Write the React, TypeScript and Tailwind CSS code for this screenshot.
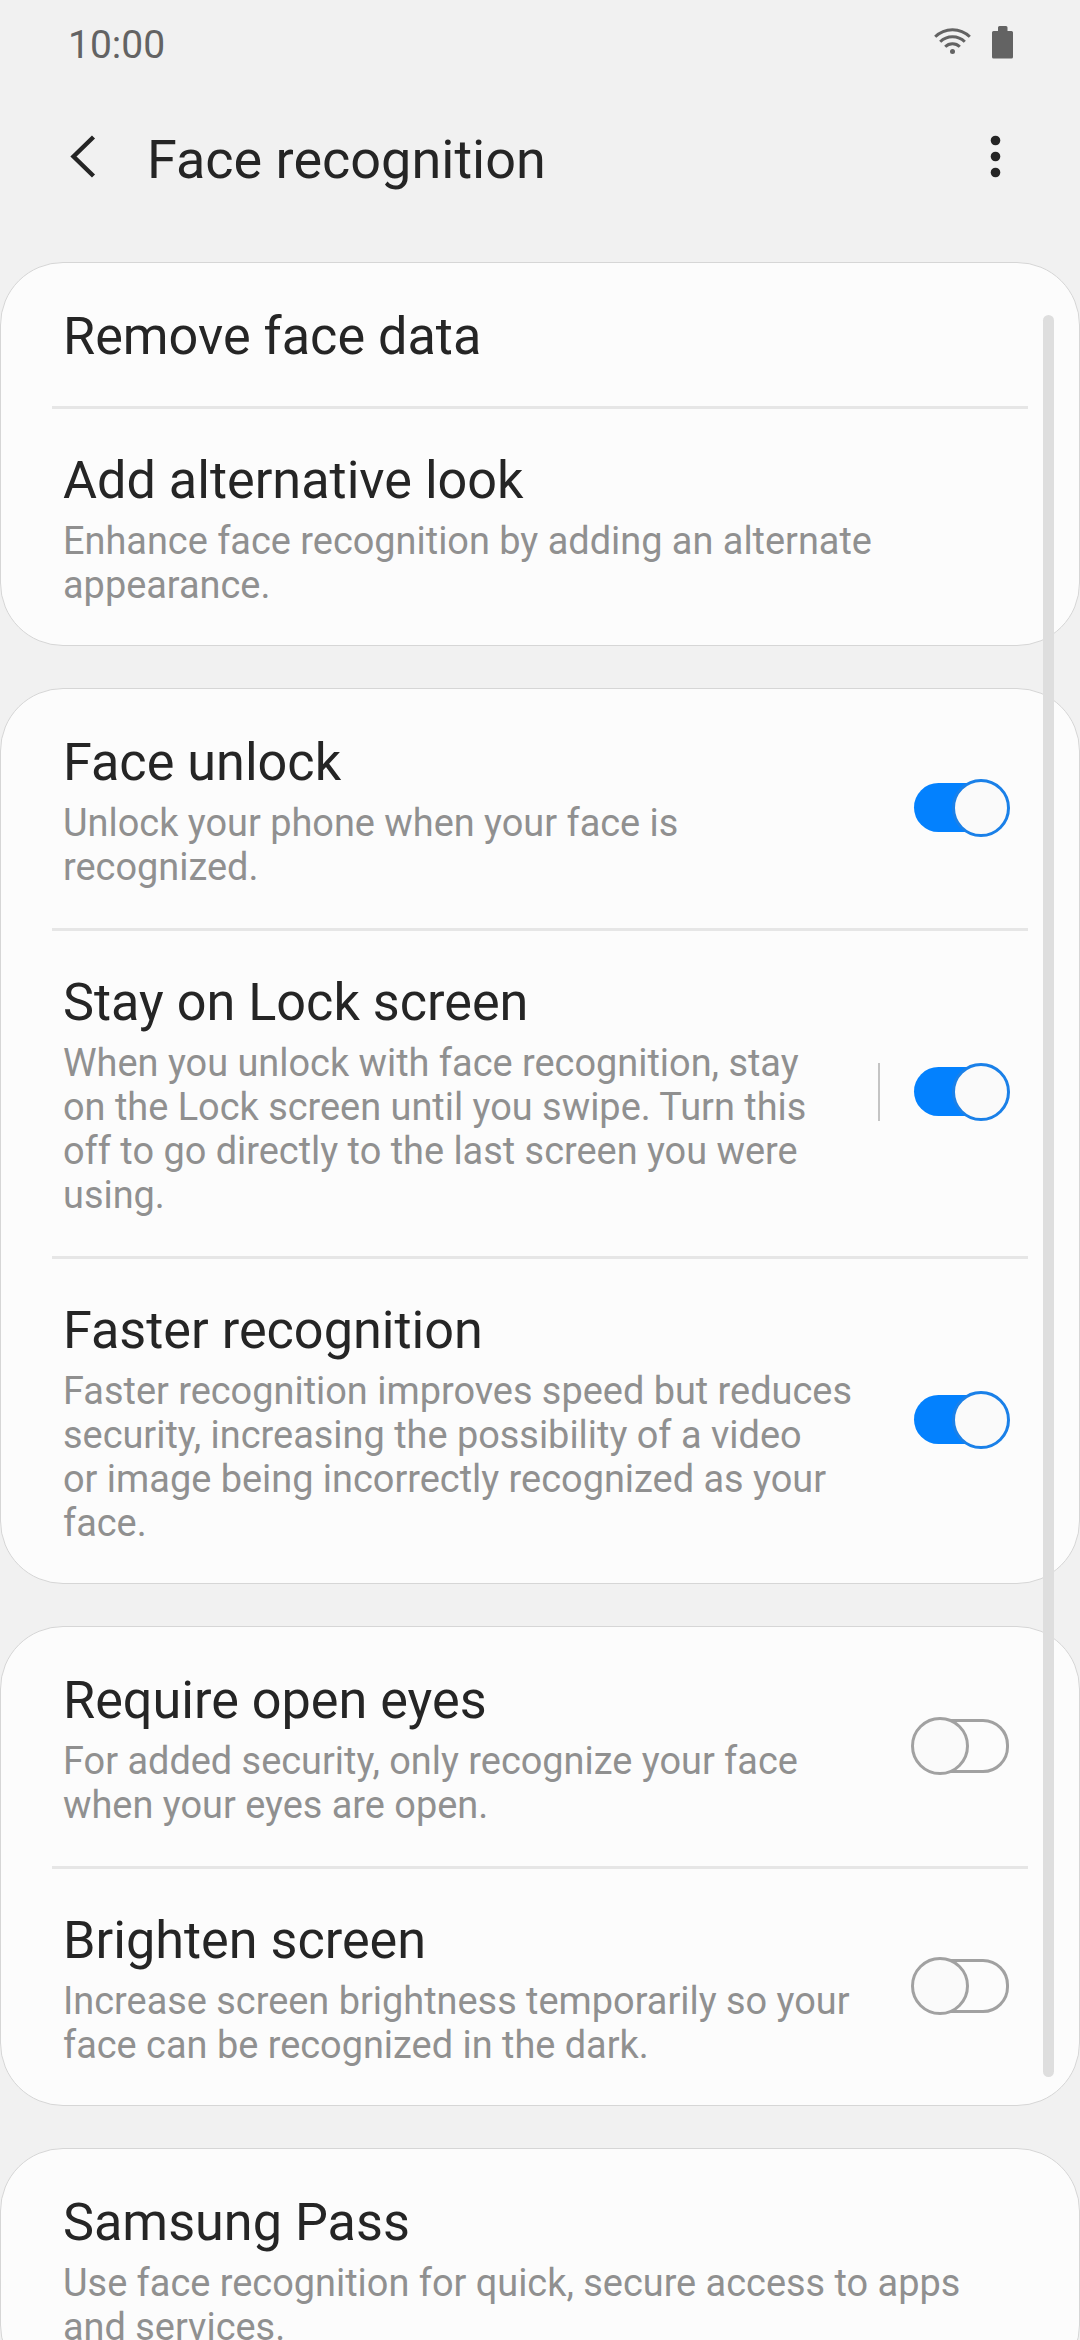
import React from "react";

type RowData = {
  title: string;
  summary?: string;
  toggle?: boolean;
  separator?: boolean;
};

const groups: RowData[][] = [
  [
    { title: "Remove face data" },
    {
      title: "Add alternative look",
      summary: "Enhance face recognition by adding an alternate\nappearance.",
    },
  ],
  [
    {
      title: "Face unlock",
      summary: "Unlock your phone when your face is\nrecognized.",
      toggle: true,
    },
    {
      title: "Stay on Lock screen",
      summary:
        "When you unlock with face recognition, stay\non the Lock screen until you swipe. Turn this\noff to go directly to the last screen you were\nusing.",
      toggle: true,
      separator: true,
    },
    {
      title: "Faster recognition",
      summary:
        "Faster recognition improves speed but reduces\nsecurity, increasing the possibility of a video\nor image being incorrectly recognized as your\nface.",
      toggle: true,
    },
  ],
  [
    {
      title: "Require open eyes",
      summary: "For added security, only recognize your face\nwhen your eyes are open.",
      toggle: false,
    },
    {
      title: "Brighten screen",
      summary:
        "Increase screen brightness temporarily so your\nface can be recognized in the dark.",
      toggle: false,
    },
  ],
  [
    {
      title: "Samsung Pass",
      summary: "Use face recognition for quick, secure access to apps\nand services.",
    },
  ],
];

function Toggle({ on }: { on: boolean }) {
  return (
    <svg
      className="h-[58px] w-[100px] shrink-0"
      viewBox="0 0 100 58"
      role="switch"
      aria-checked={on}
    >
      {on ? (
        <>
          <rect x="3" y="4" width="92" height="49" rx="24.5" fill="#0381fe" />
          <circle cx="70" cy="29" r="27.5" fill="#fafafa" stroke="#1a80e8" strokeWidth="3" />
        </>
      ) : (
        <>
          <rect x="6" y="3.5" width="90.5" height="51" rx="24.5" fill="#fcfcfc" stroke="#a1a1a1" strokeWidth="3" />
          <circle cx="29" cy="29" r="27.5" fill="#fafafa" stroke="#a1a1a1" strokeWidth="3" />
        </>
      )}
    </svg>
  );
}

function Row({ row, divided }: { row: RowData; divided: boolean }) {
  return (
    <div className="relative flex items-center pr-[68px] pl-[62px]">
      {divided && <div className="absolute top-0 right-[51px] left-[51px] h-[3px] bg-[#e6e6e6]" />}
      <div className="flex-1 pt-11 pb-[39px]">
        <div className="text-[52.2px] leading-[61px] text-[#252525]">{row.title}</div>
        {row.summary && (
          <div className="mt-2 text-[37.9px] leading-[44px] whitespace-pre text-[#909090]">
            {row.summary}
          </div>
        )}
      </div>
      {row.separator && <div className="mr-[31px] h-[58px] w-[2px] bg-[#c4c4c4]" />}
      {row.toggle !== undefined && <Toggle on={row.toggle} />}
    </div>
  );
}

export default function App() {
  return (
    <div className="relative flex h-[2340px] w-[1080px] flex-col overflow-hidden bg-[#f1f1f1] font-['Roboto',sans-serif]">
      <div className="flex h-[88px] shrink-0 items-start justify-between pr-[67px] pl-[68px]">
        <div className="mt-[22px] text-[39px] leading-[46px] text-[#636363]">10:00</div>
        <div className="mt-[26px] flex items-center gap-[21px]">
          <svg className="h-[34px] w-[37px]" viewBox="0 0 37 34" fill="none" stroke="#636363" strokeWidth="3">
            <path d="M1.2 10.8a24.5 24.5 0 0 1 34.6 0" />
            <path d="M6.2 15.8a17.4 17.4 0 0 1 24.6 0" />
            <path d="M11.2 20.8a10.3 10.3 0 0 1 14.6 0" />
            <circle cx="18.5" cy="25.5" r="2.5" fill="#636363" stroke="none" />
          </svg>
          <svg className="h-[34px] w-[21px]" viewBox="0 0 21 34" fill="#636363">
            <path d="M6 5V1.5Q6 0 7.5 0h6.5Q15.5 0 15.5 1.5V5H19.5Q21 5 21 6.5V31Q21 32.5 19.5 32.5H1.5Q0 32.5 0 31V6.5Q0 5 1.5 5Z" />
          </svg>
        </div>
      </div>
      <header className="flex h-[174px] shrink-0 items-start pr-[79px] pl-[68px]">
        <svg className="mt-[47px] h-[43px] w-[30px]" viewBox="0 0 30 43" fill="none" stroke="#252525" strokeWidth="4.4">
          <path d="M25.5 2L5.5 21.5L25.5 41" />
        </svg>
        <h1 className="mt-[40px] ml-[49px] flex-1 text-[54px] leading-[64px] font-normal text-[#252525]">
          Face recognition
        </h1>
        <svg className="mt-[47px] h-[43px] w-[11px]" viewBox="0 0 11 43" fill="#252525">
          <circle cx="5.5" cy="5.5" r="4.8" />
          <circle cx="5.5" cy="21.5" r="4.8" />
          <circle cx="5.5" cy="37.5" r="4.8" />
        </svg>
      </header>
      <main className="flex flex-col gap-[42px]">
        {groups.map((rows, i) => (
          <section key={i} className="rounded-[63px] border border-[#d6d6d6] bg-[#fcfcfc]">
            <div className="-my-px">
              {rows.map((row, j) => (
                <Row key={row.title} row={row} divided={j > 0} />
              ))}
            </div>
          </section>
        ))}
      </main>
      <div className="absolute top-[315px] left-[1043px] h-[1762px] w-[11px] rounded-full bg-[#dedede]" />
    </div>
  );
}
